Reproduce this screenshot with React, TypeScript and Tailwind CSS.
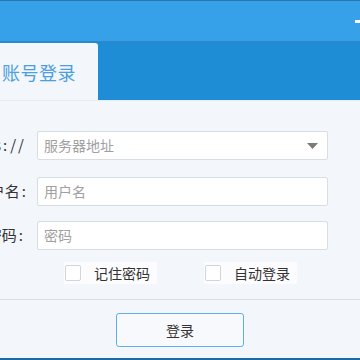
const font = { fontFamily: '"Noto Sans CJK SC", "Noto Sans", sans-serif' };

function Field({ label, suffix, placeholder, select, labelPad = 0 }: { label: string; suffix?: string; placeholder: string; select?: boolean; labelPad?: number }) {
  return (
    <div className="flex items-center">
      <div
        className="w-[32px] shrink-0 text-[15px] text-[#333] whitespace-nowrap flex justify-end"
        style={{ paddingRight: labelPad }}
      >
        <span>{label}</span>
        <span className="ml-[2px]">:</span>
        {suffix && <span className="ml-[3px] tracking-[2px]">{suffix}</span>}
      </div>
      <div className="ml-[5px] w-[291px] h-[29px] bg-white border border-[#d6dee3] rounded-[2px] flex items-center pl-[6px] pr-[9px]">
        <span className="flex-1 text-[14px] text-[#a0a0a0]">{placeholder}</span>
        {select && (
          <svg width="11" height="6" viewBox="0 0 11 6">
            <path d="M0 0 L11 0 L5.5 6 Z" fill="#7a7a7a" />
          </svg>
        )}
      </div>
    </div>
  );
}

function Check({ label }: { label: string }) {
  return (
    <div className="flex items-center h-[22px] bg-white/70 pl-[1px] pr-[7px]">
      <div className="w-[16px] h-[16px] border border-[#cfd5da] rounded-[2px] bg-white" />
      <span className="ml-[13px] text-[14px] text-[#333]">{label}</span>
    </div>
  );
}

export default function App() {
  return (
    <div className="w-[360px] h-[360px] overflow-hidden bg-[#f3f6fb] flex flex-col" style={font}>
      <div className="h-[1px] bg-[#2a75b0]" />
      <div className="h-[40px] bg-[#36a1e8] flex justify-end items-start">
        <div className="mt-[19px] w-[5px] h-[3px] bg-white" />
      </div>
      <div className="h-[2px] bg-[#2b88cb]" />
      <div className="h-[57px] bg-[#1f8dd6] flex">
        <div className="w-[98px] bg-[#f3f6fb] rounded-tr-[3px] flex items-center pl-[2px] pt-[2px]">
          <span className="text-[18px] text-[#4a9fe0] tracking-[0.5px]">账号登录</span>
        </div>
      </div>
      <div className="h-[1px] bg-[#e2edf7]" />
      <div className="flex flex-col pt-[30px] gap-[17px]">
        <Field label="https" suffix="//" placeholder="服务器地址" select labelPad={6} />
        <div className="flex flex-col gap-[15px]">
          <Field label="用户名" placeholder="用户名" labelPad={6} />
          <Field label="密码" placeholder="密码" labelPad={9} />
        </div>
      </div>
      <div className="flex pl-[64px] mt-[12px] gap-[47px]">
        <Check label="记住密码" />
        <Check label="自动登录" />
      </div>
      <div className="mt-[15px] h-[1px] bg-[#d7dee4]" />
      <div className="flex justify-center pt-[13px]">
        <div className="w-[128px] h-[34px] border border-[#5cb0ec] rounded-[3px] bg-[#f7f9fc] flex items-center justify-center text-[14px] text-[#333]">
          登录
        </div>
      </div>
      <div className="flex-1" />
      <div className="h-[2px] bg-[#1e6aa6]" />
    </div>
  );
}
